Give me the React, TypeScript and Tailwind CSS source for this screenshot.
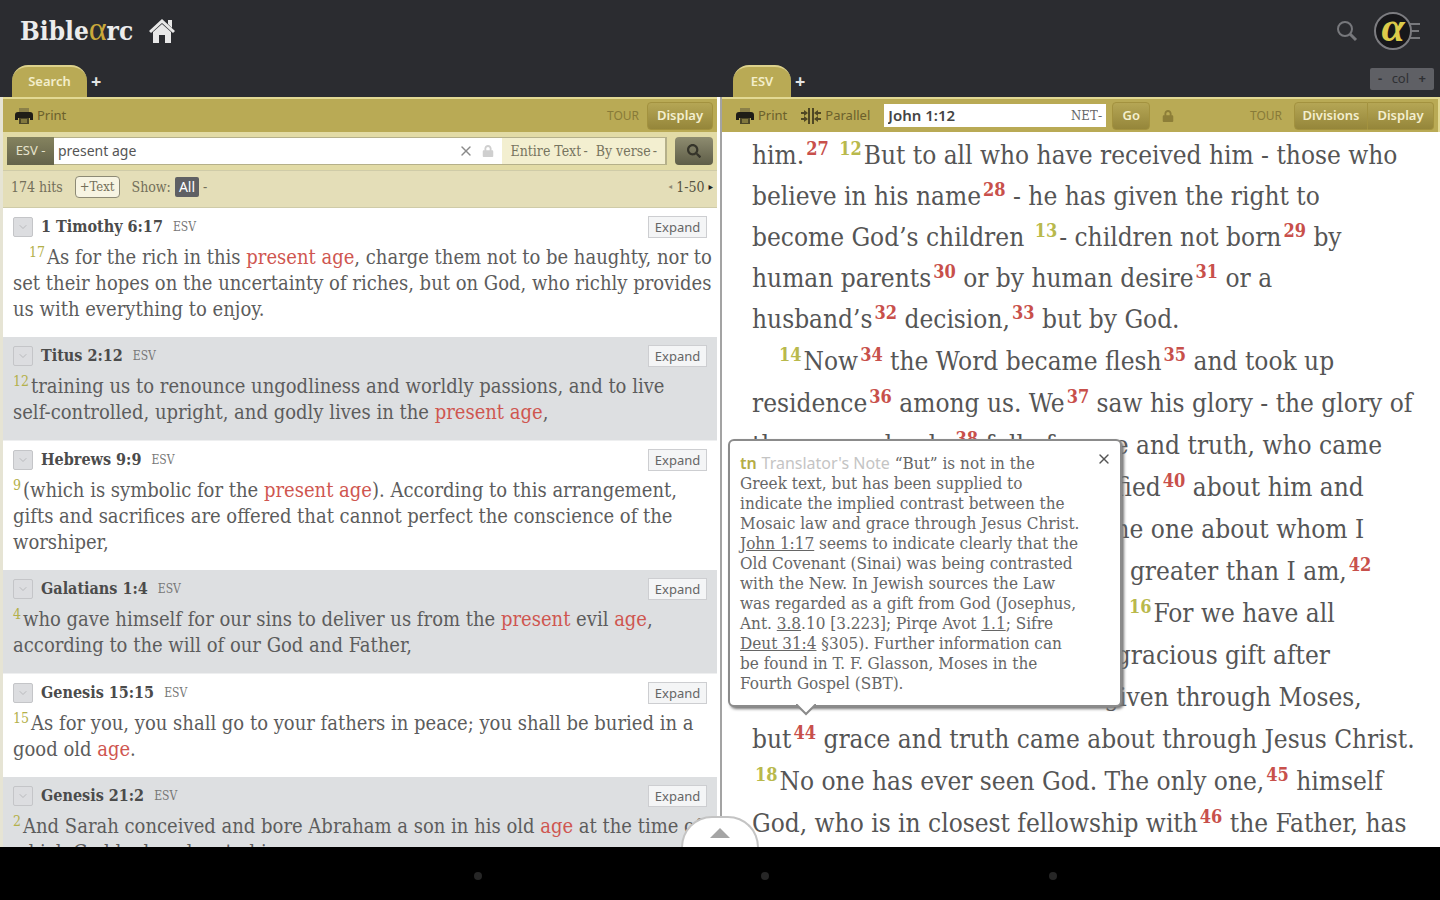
import React from "react";
import { FaLock, FaSearch } from "react-icons/fa";
import { ChevronDown, X } from "lucide-react";

const serif = "font-['DejaVu_Serif_Condensed','DejaVu_Serif',serif]";
const sans = "font-['Noto_Sans',sans-serif]";
const greek = "font-['Liberation_Serif',serif]";

const Hit = ({ children }: { children: React.ReactNode }) => (
  <span className="text-[#cf5650]">{children}</span>
);

const Num = ({ children }: { children: React.ReactNode }) => (
  <span className="mr-0.5 align-[7px] text-sm leading-none text-[#b3b04a]">
    {children}
  </span>
);

const Verse = ({ children }: { children: React.ReactNode }) => (
  <span className="mr-0.5 ml-[3px] align-[9px] text-lg leading-none font-bold text-[#b9b94c]">
    {children}
  </span>
);

const Note = ({ children }: { children: React.ReactNode }) => (
  <button className="ml-0.5 align-[9px] text-lg leading-none font-bold text-[#c8504b]">
    {children}
  </button>
);

const PrintIcon = () => (
  <svg className="h-4 w-[18px]" viewBox="0 0 18 16">
    <path d="M4 0h10v5H4z" fill="#8b8049" />
    <path
      d="M3 4h12a3 3 0 0 1 3 3v5h-3v-2H3v2H0V7a3 3 0 0 1 3-3z"
      fill="#1f1d17"
    />
    <path d="M4 10h10v6H4z" fill="#4c4628" />
    <path d="M6 12h6M6 14h6" stroke="#b9aa55" />
  </svg>
);

const results = [
  {
    title: "1 Timothy 6:17",
    lines: [
      <>
        <span className="pl-4" />
        <Num>17</Num>As for the rich in this <Hit>present age</Hit>, charge them
        not to be haughty, nor to
      </>,
      <>set their hopes on the uncertainty of riches, but on God, who richly provides</>,
      <>us with everything to enjoy.</>,
    ],
  },
  {
    title: "Titus 2:12",
    lines: [
      <>
        <Num>12</Num>training us to renounce ungodliness and worldly passions,
        and to live
      </>,
      <>
        self-controlled, upright, and godly lives in the <Hit>present age</Hit>,
      </>,
    ],
  },
  {
    title: "Hebrews 9:9",
    lines: [
      <>
        <Num>9</Num>(which is symbolic for the <Hit>present age</Hit>).
        According to this arrangement,
      </>,
      <>gifts and sacrifices are offered that cannot perfect the conscience of the</>,
      <>worshiper,</>,
    ],
  },
  {
    title: "Galatians 1:4",
    lines: [
      <>
        <Num>4</Num>who gave himself for our sins to deliver us from the{" "}
        <Hit>present</Hit> evil <Hit>age</Hit>,
      </>,
      <>according to the will of our God and Father,</>,
    ],
  },
  {
    title: "Genesis 15:15",
    lines: [
      <>
        <Num>15</Num>As for you, you shall go to your fathers in peace; you
        shall be buried in a
      </>,
      <>
        good old <Hit>age</Hit>.
      </>,
    ],
  },
  {
    title: "Genesis 21:2",
    lines: [
      <>
        <Num>2</Num>And Sarah conceived and bore Abraham a son in his old{" "}
        <Hit>age</Hit> at the time of
      </>,
      <>which God had spoken to him.</>,
    ],
  },
];

const goldButton =
  "h-7 border border-[#a3923f] bg-linear-to-b from-[#b5a655] to-[#95863a] text-[13px] font-semibold text-[#f4efcf]";

const Tab = ({ label, className }: { label: string; className: string }) => (
  <div className="flex items-end">
    <button
      className={`h-8 rounded-t-2xl border-t-2 border-[#ddd28c] bg-[#b9aa55] text-[13px] font-semibold text-[#f3eecb] ${className}`}
    >
      {label}
    </button>
    <button
      aria-label="Add tab"
      className="h-8 px-1 text-lg font-bold text-[#e4e4e4]"
    >
      +
    </button>
  </div>
);

const SearchPane = () => {
  return (
    <section className="flex min-w-0 flex-col overflow-hidden border-l-3 border-[#e6e4d4] pr-[3px]">
      {/* Toolbar */}
      <div className="flex h-[35px] shrink-0 items-center border-t-2 border-[#e2d993] bg-[#b9aa55] pr-1 pl-3">
        <button className="flex items-center gap-1 text-[13px] text-[#6b602c]">
          <PrintIcon />
          Print
        </button>
        <a href="#tour" className="mr-2 ml-auto text-xs text-[#887a38]">
          TOUR
        </a>
        <button className={`w-[66px] rounded-sm ${goldButton}`}>Display</button>
      </div>

      {/* Query */}
      <form className="flex h-[38px] shrink-0 items-center bg-[#e2dba6] px-1 text-[#77745f]">
        <button
          type="button"
          className="h-7 w-[47px] bg-linear-to-b from-[#85835f] to-[#64634a] text-[13px] text-[#e6e3cc]"
        >
          ESV -
        </button>
        <div className="flex h-7 min-w-0 flex-1 items-center border-y border-r-2 border-[#b5b08a] bg-white">
          <input
            aria-label="Search text"
            defaultValue="present age"
            className="min-w-0 flex-1 px-1 text-sm text-[#555] outline-none"
          />
          <button type="button" aria-label="Clear">
            <X className="size-4 text-[#8a8a8a]" />
          </button>
          <FaLock className="mx-2 size-3 text-[#cfcfcf]" />
          <div
            className={`flex h-full items-center bg-[#f3efd0] px-2 text-sm ${serif}`}
          >
            <select aria-label="Range" className="appearance-none">
              <option>Entire Text</option>
            </select>
            <span className="mr-2 ml-0.5">-</span>
            <select aria-label="Group by" className="appearance-none">
              <option>By verse</option>
            </select>
            <span className="ml-0.5">-</span>
          </div>
        </div>
        <button
          aria-label="Search"
          className="ml-2 flex h-7 w-[38px] items-center justify-center rounded-sm bg-linear-to-b from-[#8e8c70] to-[#5f5e48]"
        >
          <FaSearch className="size-[14px] text-[#35342a]" />
        </button>
      </form>

      {/* Hit count */}
      <div
        className={`flex h-[38px] shrink-0 items-center border-y border-[#cfcba8] bg-[#e4deb8] pr-1 pb-1 pl-2 text-sm text-[#736f5a] ${serif}`}
      >
        <span>174 hits</span>
        <button className="ml-3 h-[22px] rounded-sm border border-[#8d8a75] bg-[#f7f4e2] px-1 text-[13px] leading-5">
          +Text
        </button>
        <span className="ml-3">Show:</span>
        <button
          className={`mx-1 h-5 rounded-xs bg-[#5f6064] px-1 text-sm leading-5 text-white ${sans}`}
        >
          All
        </button>
        <span>-</span>
        <div className="ml-auto flex items-center gap-1">
          <button className="text-[8px] text-[#8d8a75]">◂</button>
          <span className="text-[#55523f]">1-50</span>
          <button className="text-[10px] text-[#222]">▸</button>
        </div>
      </div>

      {/* Results */}
      <div className="min-h-0 flex-1 overflow-hidden">
        {results.map((result) => (
          <article
            key={result.title}
            className="px-[10px] pt-[5px] pb-[15px] even:border-b even:border-[#eeeff0] even:bg-[#dddfe1]"
          >
            <div className="mb-[3px] flex h-7 items-center">
              <label className="flex items-center gap-2">
                <span className="relative flex">
                  <input
                    type="checkbox"
                    className="size-5 appearance-none rounded-xs border border-[#c4c5c8] bg-[#dcdde0]"
                  />
                  <ChevronDown className="absolute top-1 left-1 size-3 text-[#b9babd]" />
                </span>
                <span className={`text-base font-bold text-[#4b4b4b] ${serif}`}>
                  {result.title}
                </span>
              </label>
              <span className={`ml-[10px] text-xs text-[#777] ${serif}`}>ESV</span>
              <button className="ml-auto h-[22px] w-[59px] border border-[#cdced1] bg-[#f4f5f6] text-[13px] leading-5 text-[#666]">
                Expand
              </button>
            </div>
            <p
              className={`text-xl leading-[26px] whitespace-nowrap text-[#5c5c5c] ${serif}`}
            >
              {result.lines.map((line, i) => (
                <span key={i} className="block">
                  {line}
                </span>
              ))}
            </p>
          </article>
        ))}
      </div>
    </section>
  );
};

const NotePopup = () => (
  <aside
    className={`absolute top-[342px] left-[6px] w-[394px] rounded-md border-2 border-[#8b8b8b] bg-white pt-3 pr-8 pb-2 pl-[10px] text-[17px] leading-5 text-[#666] shadow-[2px_2px_3px_#777] ${serif}`}
  >
    <button aria-label="Close note" className="absolute top-[10px] right-2">
      <X className="size-4 text-[#555]" />
    </button>
    <div className="min-h-[244px] whitespace-nowrap">
      <span className={`text-[16px] leading-none font-semibold text-[#b5ad45] ${sans}`}>
        tn
      </span>{" "}
      <span className={`text-[16px] leading-none text-[#c4c4c4] ${sans}`}>
        Translator's Note
      </span>{" "}
      “But” is not in the
      <br />
      Greek text, but has been supplied to
      <br />
      indicate the implied contrast between the
      <br />
      Mosaic law and grace through Jesus Christ.
      <br />
      <a href="#john-1-17" className="underline">
        John 1:17
      </a>{" "}
      seems to indicate clearly that the
      <br />
      Old Covenant (Sinai) was being contrasted
      <br />
      with the New. In Jewish sources the Law
      <br />
      was regarded as a gift from God (Josephus,
      <br />
      Ant.{" "}
      <a href="#ant-3-8" className="underline">
        3.8
      </a>
      .10 [3.223]; Pirqe Avot{" "}
      <a href="#avot-1-1" className="underline">
        1.1
      </a>
      ; Sifre
      <br />
      <a href="#deut-31-4" className="underline">
        Deut 31:4
      </a>{" "}
      §305). Further information can
      <br />
      be found in T. F. Glasson, Moses in the
      <br />
      Fourth Gospel (SBT).
    </div>
    <svg
      className="absolute -bottom-[11px] left-[66px] h-3 w-5"
      viewBox="0 0 20 12"
    >
      <path d="M0 0 L10 10 L20 0" fill="#fff" stroke="#8b8b8b" strokeWidth="2" />
    </svg>
  </aside>
);

const ReadingPane = () => {
  return (
    <section className="relative flex min-w-0 flex-col overflow-hidden border-l-2 border-[#a3a3a3]">
      {/* Toolbar */}
      <div className="flex h-[35px] shrink-0 items-center border-t-2 border-r-2 border-[#e2d993] bg-[#b9aa55] pr-1 pl-[14px] text-[13px] text-[#6b602c]">
        <button className="flex items-center gap-1">
          <PrintIcon />
          Print
        </button>
        <button className="ml-[14px] flex items-center gap-1">
          <svg className="h-4 w-5" viewBox="0 0 20 16" fill="#4f4724">
            <path d="M7 0h2v16H7zM11 0h2v16h-2z" />
            <path d="M0 4h3V2l4 3-4 3V6H0zM0 10h3V8l4 3-4 3v-2H0z" />
            <path d="M20 4h-3V2l-4 3 4 3V6h3zM20 10h-3V8l-4 3 4 3v-2h3z" />
          </svg>
          Parallel
        </button>
        <div className="ml-[14px] flex h-[23px] w-[222px] items-center bg-white px-1">
          <input
            aria-label="Passage"
            defaultValue="John 1:12"
            className="min-w-0 flex-1 text-[15px] font-semibold text-[#444] outline-none"
          />
          <select
            aria-label="Version"
            className={`appearance-none text-[13px] text-[#666] ${serif}`}
          >
            <option>NET</option>
          </select>
          <span className="text-[#666]">-</span>
        </div>
        <button className={`ml-[6px] w-[38px] rounded-sm ${goldButton}`}>
          Go
        </button>
        <FaLock className="ml-3 size-3 text-[#8d7e38]" />
        <a href="#tour" className="mr-3 ml-auto text-xs text-[#887a38]">
          TOUR
        </a>
        <button className={`w-[74px] rounded-l-sm ${goldButton}`}>
          Divisions
        </button>
        <button className={`w-[66px] rounded-r-sm border-l-0 ${goldButton}`}>
          Display
        </button>
      </div>

      {/* Passage */}
      <div
        className={`min-h-0 flex-1 overflow-hidden pl-[30px] text-[26px] whitespace-nowrap text-[#555] ${serif}`}
      >
        <p className="pt-[3px] leading-[41px]">
          him.<Note>27</Note> <Verse>12</Verse>But to all who have received him
          - those who
          <br />
          believe in his name<Note>28</Note> - he has given the right to
          <br />
          become God’s children <Verse>13</Verse>- children not born
          <Note>29</Note> by
          <br />
          human parents<Note>30</Note> or by human desire<Note>31</Note> or a
          <br />
          husband’s<Note>32</Note> decision,<Note>33</Note> but by God.
        </p>
        <p className="indent-6 leading-[42px]">
          <Verse>14</Verse>Now<Note>34</Note> the Word became flesh
          <Note>35</Note> and took up
          <br />
          residence<Note>36</Note> among us. We<Note>37</Note> saw his glory -
          the glory of
          <br />
          the one and only,<Note>38</Note> full of grace and truth, who came
          <br />
          from the Father.<Note>39</Note> <Verse>15</Verse>John testified
          <Note>40</Note> about him and
          <br />
          shouted out,<Note>41</Note> “This one was the one about whom I
          <br />
          said 'He who comes after me is greater than I am,<Note>42</Note>
          <br />
          because he existed before me.' <Verse>16</Verse>For we have all
          <br />
          received from his fullness one gracious gift after
          <br />
          another.<Note>43</Note> <Verse>17</Verse>For the law was given through
          Moses,
          <br />
          but<Note>44</Note> grace and truth came about through Jesus Christ.
          <br />
          <Verse>18</Verse>No one has ever seen God. The only one,
          <Note>45</Note> himself
          <br />
          God, who is in closest fellowship with<Note>46</Note> the Father, has
        </p>
      </div>
      <NotePopup />
    </section>
  );
};

const App = () => {
  return (
    <div className={`flex h-screen flex-col overflow-hidden bg-white ${sans}`}>
      {/* Header */}
      <header className="shrink-0 bg-[#2b2c30]">
        <div className="flex h-[62px] items-center px-5">
          <h1 className={`text-[26px] font-bold text-[#ececec] ${serif}`}>
            Bible
            <span
              className={`text-[34px] leading-none font-normal text-[#c9a93a] ${greek}`}
            >
              α
            </span>
            rc
          </h1>
          <a href="#home" aria-label="Home" className="ml-4">
            <svg className="size-[26px]" viewBox="0 0 26 26" fill="#e8e8e8">
              <path d="M13 1 L26 13 L24 15 L13 5 L2 15 L0 13 Z" />
              <path d="M19 2h4v8l-4-4z" />
              <path d="M13 6 L22 14 V25 H16 V17 H10 V25 H4 V14 Z" />
            </svg>
          </a>
          <button aria-label="Search" className="ml-auto">
            <svg
              className="size-[22px]"
              viewBox="0 0 22 22"
              fill="none"
              stroke="#77787c"
              strokeWidth="2"
            >
              <circle cx="9" cy="9" r="7" />
              <path d="M14 14l6 6" strokeWidth="3" />
            </svg>
          </button>
          <button aria-label="Account menu" className="ml-4 flex items-center">
            <span
              className={`z-10 flex size-[38px] items-center justify-center rounded-full border-2 border-[#7c7c80] bg-[#17171a] pb-2 text-[42px] leading-none font-bold text-[#dccb4a] italic ${greek}`}
            >
              α
            </span>
            <svg
              className="-ml-2 h-5 w-4"
              viewBox="0 0 16 20"
              stroke="#77787c"
              strokeWidth="2"
            >
              <path d="M3 3h13M3 10h12M3 17h13" />
            </svg>
          </button>
        </div>
        <div className="grid h-[35px] grid-cols-2 items-end">
          <div className="pl-3">
            <Tab label="Search" className="w-[75px]" />
          </div>
          <div className="flex items-end justify-between pr-[6px] pl-[13px]">
            <Tab label="ESV" className="w-[58px]" />
            <div className="mb-[7px] flex h-[22px] w-16 items-center justify-between rounded-xs bg-[#5f6065] px-2 text-[13px] text-[#2f3034]">
              <button aria-label="Remove column" className="font-bold">
                -
              </button>
              <span>col</span>
              <button aria-label="Add column" className="font-bold">
                +
              </button>
            </div>
          </div>
        </div>
      </header>

      <main className="relative grid min-h-0 flex-1 grid-cols-2 grid-rows-[minmax(0,1fr)] overflow-hidden">
        <SearchPane />
        <ReadingPane />
        <button
          aria-label="Show panel"
          className="absolute bottom-0 left-1/2 flex h-[31px] w-[78px] -translate-x-1/2 items-center justify-center rounded-t-full border-2 border-b-0 border-[#c4c4c4] bg-white"
        >
          <svg className="h-[10px] w-5" viewBox="0 0 20 10">
            <path d="M10 0 L20 10 H0 Z" fill="#a5a5a5" />
          </svg>
        </button>
      </main>

      {/* System navigation */}
      <nav className="grid h-[53px] shrink-0 grid-cols-[334px_1fr_1fr_1fr_243px] items-center justify-items-center bg-black pt-1">
        <button
          aria-label="Back"
          className="col-start-2 size-2 rounded-full bg-[#262626]"
        />
        <button aria-label="Home" className="size-2 rounded-full bg-[#262626]" />
        <button
          aria-label="Recent apps"
          className="size-2 rounded-full bg-[#262626]"
        />
      </nav>
    </div>
  );
};

export default App;
